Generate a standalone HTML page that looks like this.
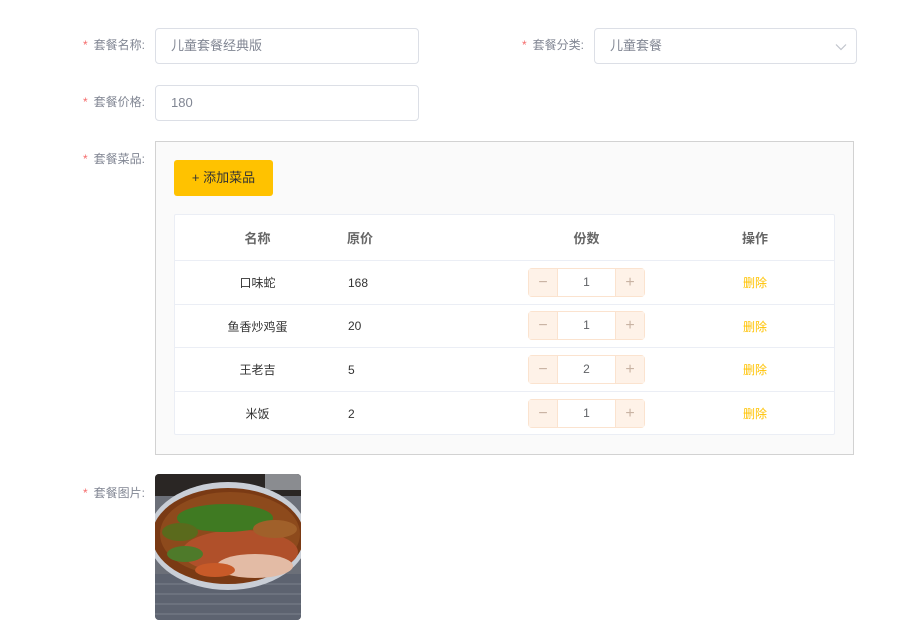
<!DOCTYPE html>
<html><head><meta charset="utf-8"><style>
*{box-sizing:border-box;margin:0;padding:0}
body{width:914px;height:641px;background:#fff;font-family:"Liberation Sans","Noto Sans CJK SC",sans-serif;font-size:12px;color:#333;position:relative;overflow:hidden}
.abs{position:absolute}
.lbl{position:absolute;width:90px;text-align:right;color:#818693;font-size:12px;line-height:16px}
.lbl i{color:#f56c6c;font-style:normal;margin-right:6px}
.inp{position:absolute;border:1px solid #dcdfe6;border-radius:4px;background:#fff;height:36px;padding-left:15px;line-height:34px;color:#818693;font-size:13px}
.box{position:absolute;left:155px;top:141px;width:699px;height:314px;background:#fafafa;border:1px solid #d2d2d2}
.btn{position:absolute;left:174px;top:160px;width:99px;height:36px;background:#ffc200;border-radius:3px;color:#333;line-height:36px;text-align:center;font-size:13px}
.tbl{position:absolute;left:174px;top:214px;width:661px;height:221px;background:#fff;border:1px solid #ebeef5;border-radius:2px}
.row{position:absolute;left:0;width:659px;border-bottom:1px solid #ebeef5}
.c{position:absolute;top:0;height:100%;display:flex;align-items:center}
.th{font-weight:bold;color:#666;font-size:13px}
.step{position:absolute;left:353px;width:117px;height:29px;border:1px solid #fbe3cf;border-radius:4px;background:#fff}
.step .m,.step .p{position:absolute;top:0;width:29px;height:27px;background:#fef2e8;color:#c9b3a3;display:flex;align-items:center;justify-content:center;font-size:16px}
.step .m{left:0;border-right:1px solid #fbe3cf}
.step .p{right:0;border-left:1px solid #fbe3cf}
.step .v{position:absolute;left:29px;right:29px;text-align:center;line-height:27px;color:#606266}
.del{color:#ffc200}
</style></head><body>
<div class="lbl" style="left:55px;top:37px"><i>*</i>套餐名称:</div>
<div class="inp" style="left:155px;top:28px;width:264px">儿童套餐经典版</div>
<div class="lbl" style="left:494px;top:37px"><i>*</i>套餐分类:</div>
<div class="inp" style="left:594px;top:28px;width:263px">儿童套餐
<svg class="abs" style="right:9px;top:14px" width="12" height="8" viewBox="0 0 12 8"><path d="M1 1.5L6 6.5L11 1.5" fill="none" stroke="#c0c4cc" stroke-width="1.2"/></svg></div>
<div class="lbl" style="left:55px;top:94px"><i>*</i>套餐价格:</div>
<div class="inp" style="left:155px;top:85px;width:264px">180</div>
<div class="lbl" style="left:55px;top:151px"><i>*</i>套餐菜品:</div>
<div class="box"></div>
<div class="btn">+ 添加菜品</div>
<div class="tbl">
 <div class="row" style="top:0;height:46px">
  <div class="c th" style="left:0;width:165px;justify-content:center">名称</div>
  <div class="c th" style="left:172px">原价</div>
  <div class="c th" style="left:353px;width:117px;justify-content:center">份数</div>
  <div class="c th" style="left:530px;width:100px;justify-content:center">操作</div>
 </div>
 <div class="row" style="top:46px;height:44px">
  <div class="c" style="left:0;width:165px;justify-content:center">口味蛇</div>
  <div class="c" style="left:173px">168</div>
  <div class="step" style="top:7px"><div class="m">−</div><div class="v">1</div><div class="p">+</div></div>
  <div class="c del" style="left:530px;width:100px;justify-content:center">删除</div>
 </div>
 <div class="row" style="top:90px;height:43px">
  <div class="c" style="left:0;width:165px;justify-content:center">鱼香炒鸡蛋</div>
  <div class="c" style="left:173px">20</div>
  <div class="step" style="top:6px"><div class="m">−</div><div class="v">1</div><div class="p">+</div></div>
  <div class="c del" style="left:530px;width:100px;justify-content:center">删除</div>
 </div>
 <div class="row" style="top:133px;height:44px">
  <div class="c" style="left:0;width:165px;justify-content:center">王老吉</div>
  <div class="c" style="left:173px">5</div>
  <div class="step" style="top:7px"><div class="m">−</div><div class="v">2</div><div class="p">+</div></div>
  <div class="c del" style="left:530px;width:100px;justify-content:center">删除</div>
 </div>
 <div class="row" style="top:177px;height:43px;border-bottom:none">
  <div class="c" style="left:0;width:165px;justify-content:center">米饭</div>
  <div class="c" style="left:173px">2</div>
  <div class="step" style="top:7px"><div class="m">−</div><div class="v">1</div><div class="p">+</div></div>
  <div class="c del" style="left:530px;width:100px;justify-content:center">删除</div>
 </div>
</div>
<div class="lbl" style="left:55px;top:485px"><i>*</i>套餐图片:</div>
<svg class="abs" style="left:155px;top:474px;border-radius:4px" width="146" height="146" viewBox="0 0 146 146">
 <rect width="146" height="146" fill="#6b6f78"/>
 <rect width="146" height="22" fill="#2a2624"/>
 <rect x="110" y="0" width="36" height="16" fill="#8a8c90"/>
 <rect y="100" width="146" height="46" fill="#5d6370"/>
 <g stroke="#7b818d" stroke-width="1">
  <line x1="0" y1="110" x2="146" y2="110"/><line x1="0" y1="120" x2="146" y2="120"/><line x1="0" y1="130" x2="146" y2="130"/><line x1="0" y1="140" x2="146" y2="140"/>
 </g>
 <ellipse cx="73" cy="62" rx="80" ry="54" fill="#c9ced6"/>
 <ellipse cx="73" cy="62" rx="76" ry="48" fill="#7a3a14"/>
 <ellipse cx="75" cy="60" rx="70" ry="42" fill="#8d4a1c"/>
 <ellipse cx="85" cy="78" rx="58" ry="22" fill="#b0502a"/>
 <ellipse cx="100" cy="92" rx="38" ry="12" fill="#e3bba5"/>
 <ellipse cx="70" cy="44" rx="48" ry="14" fill="#3f7a22"/>
 <ellipse cx="25" cy="58" rx="18" ry="9" fill="#5a6a1c"/>
 <ellipse cx="120" cy="55" rx="22" ry="9" fill="#a0602a"/>
 <ellipse cx="30" cy="80" rx="18" ry="8" fill="#4e7a2a"/>
 <ellipse cx="60" cy="96" rx="20" ry="7" fill="#c85a28"/>
</svg>
</body></html>
